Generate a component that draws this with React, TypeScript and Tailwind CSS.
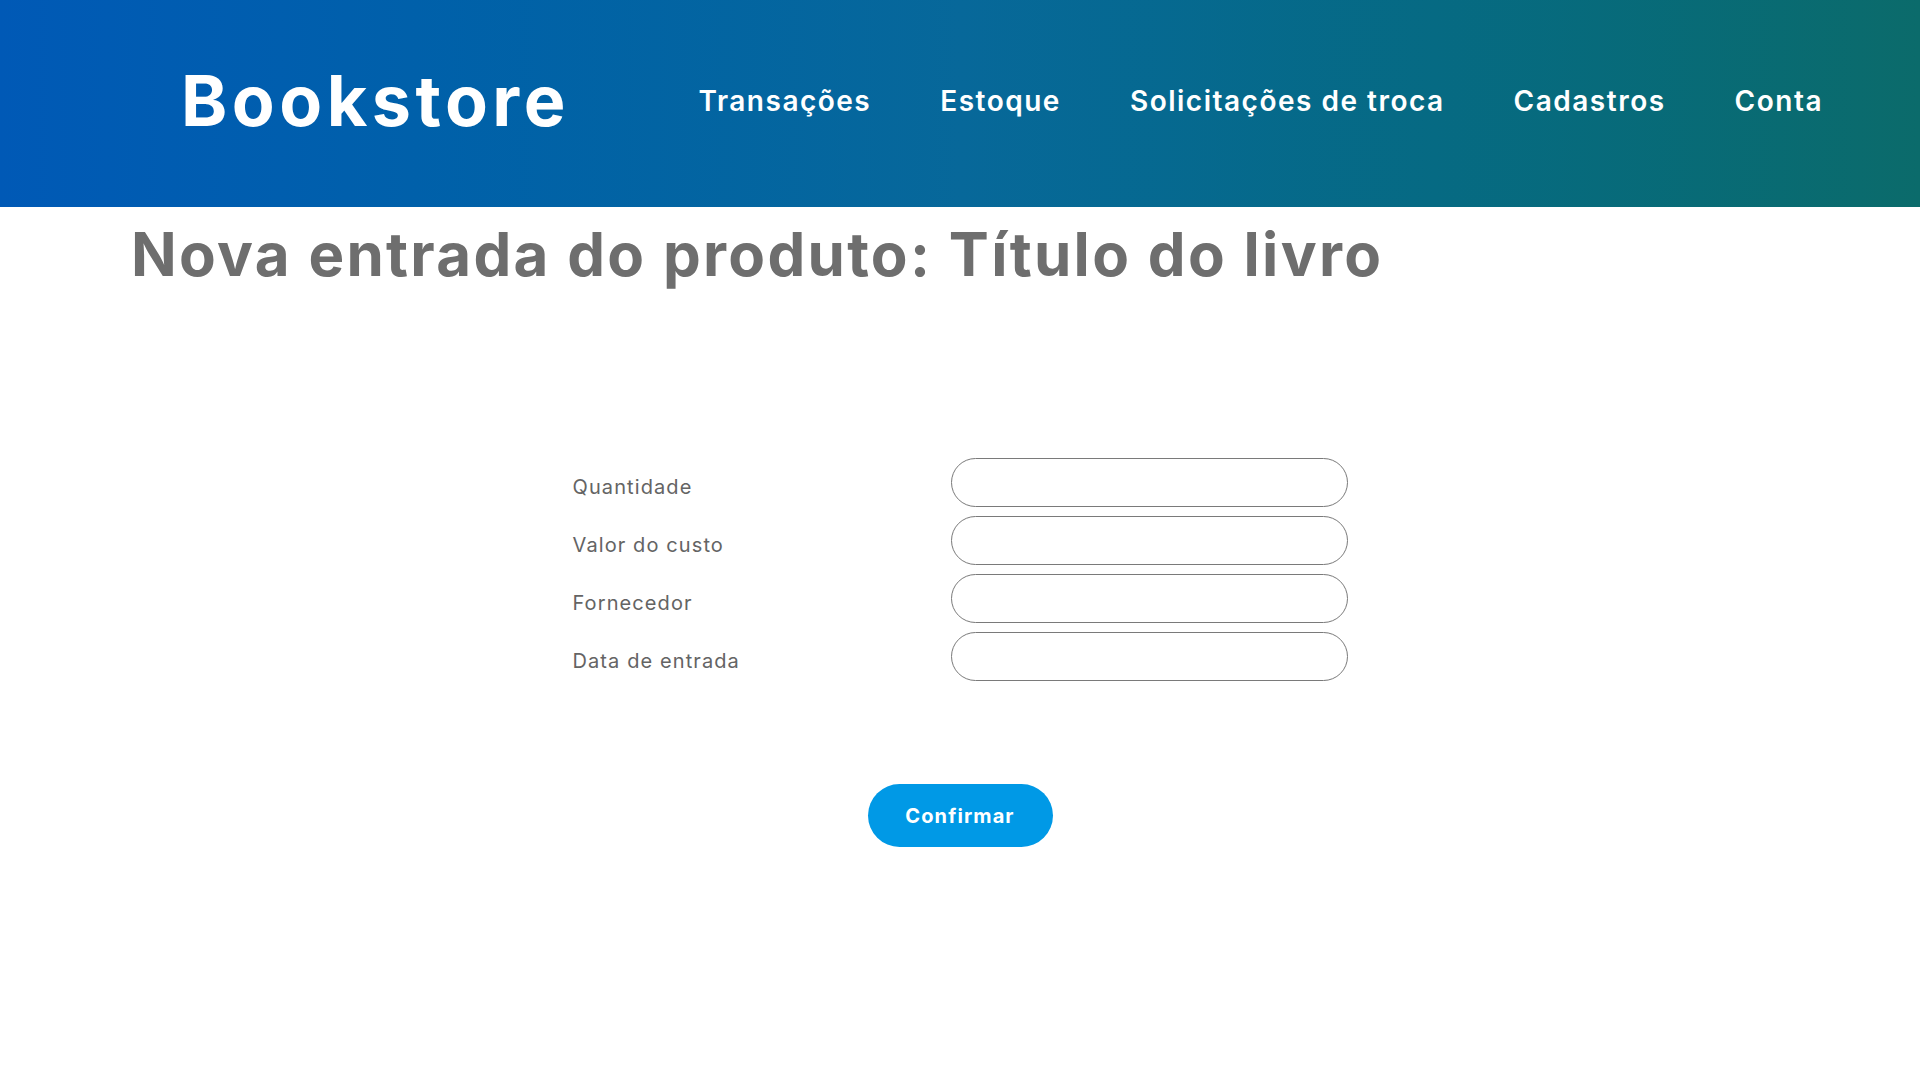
import React from "react";

const font = { fontFamily: "Inter, 'Open Sans', 'Liberation Sans', sans-serif" };

export default function App() {
  const nav = ["Transações", "Estoque", "Solicitações de troca", "Cadastros", "Conta"];
  const fields = ["Quantidade", "Valor do custo", "Fornecedor", "Data de entrada"];
  return (
    <div className="min-h-screen w-full bg-white" style={font}>
      <header className="flex h-[207px] w-full items-center bg-gradient-to-r from-[#0059b6] via-[#07689a] to-[#0b6b6b] pb-[5px]">
        <div className="ml-[181px] text-[70px] font-bold leading-none tracking-[4.5px] text-white">Bookstore</div>
        <nav className="ml-auto mr-[97px] flex items-center gap-[69px]">
          {nav.map((n) => (
            <span key={n} className="text-[28px] font-semibold leading-none tracking-[1.5px] text-white">
              {n}
            </span>
          ))}
        </nav>
      </header>
      <h1 className="mt-[11px] pl-[131px] text-[60px] font-bold leading-[1.2] tracking-[2.3px] text-[#6e6e6e]">
        Nova entrada do produto: Título do livro
      </h1>
      <div className="mx-auto mt-[168px] grid w-[775px] grid-cols-[378px_397px] gap-y-[9px]">
        {fields.map((f) => (
          <React.Fragment key={f}>
            <label className="flex items-center pt-[9px] text-[20px] tracking-[1.1px] text-[#646464]">{f}</label>
            <input className="h-[49px] w-[397px] rounded-full border border-[#7a7a7a] bg-white px-5 outline-none" />
          </React.Fragment>
        ))}
      </div>
      <div className="mt-[103px] flex justify-center">
        <button className="h-[63px] w-[185px] rounded-full bg-[#0099e6] text-[20px] font-bold tracking-[1.1px] text-white">
          Confirmar
        </button>
      </div>
    </div>
  );
}
